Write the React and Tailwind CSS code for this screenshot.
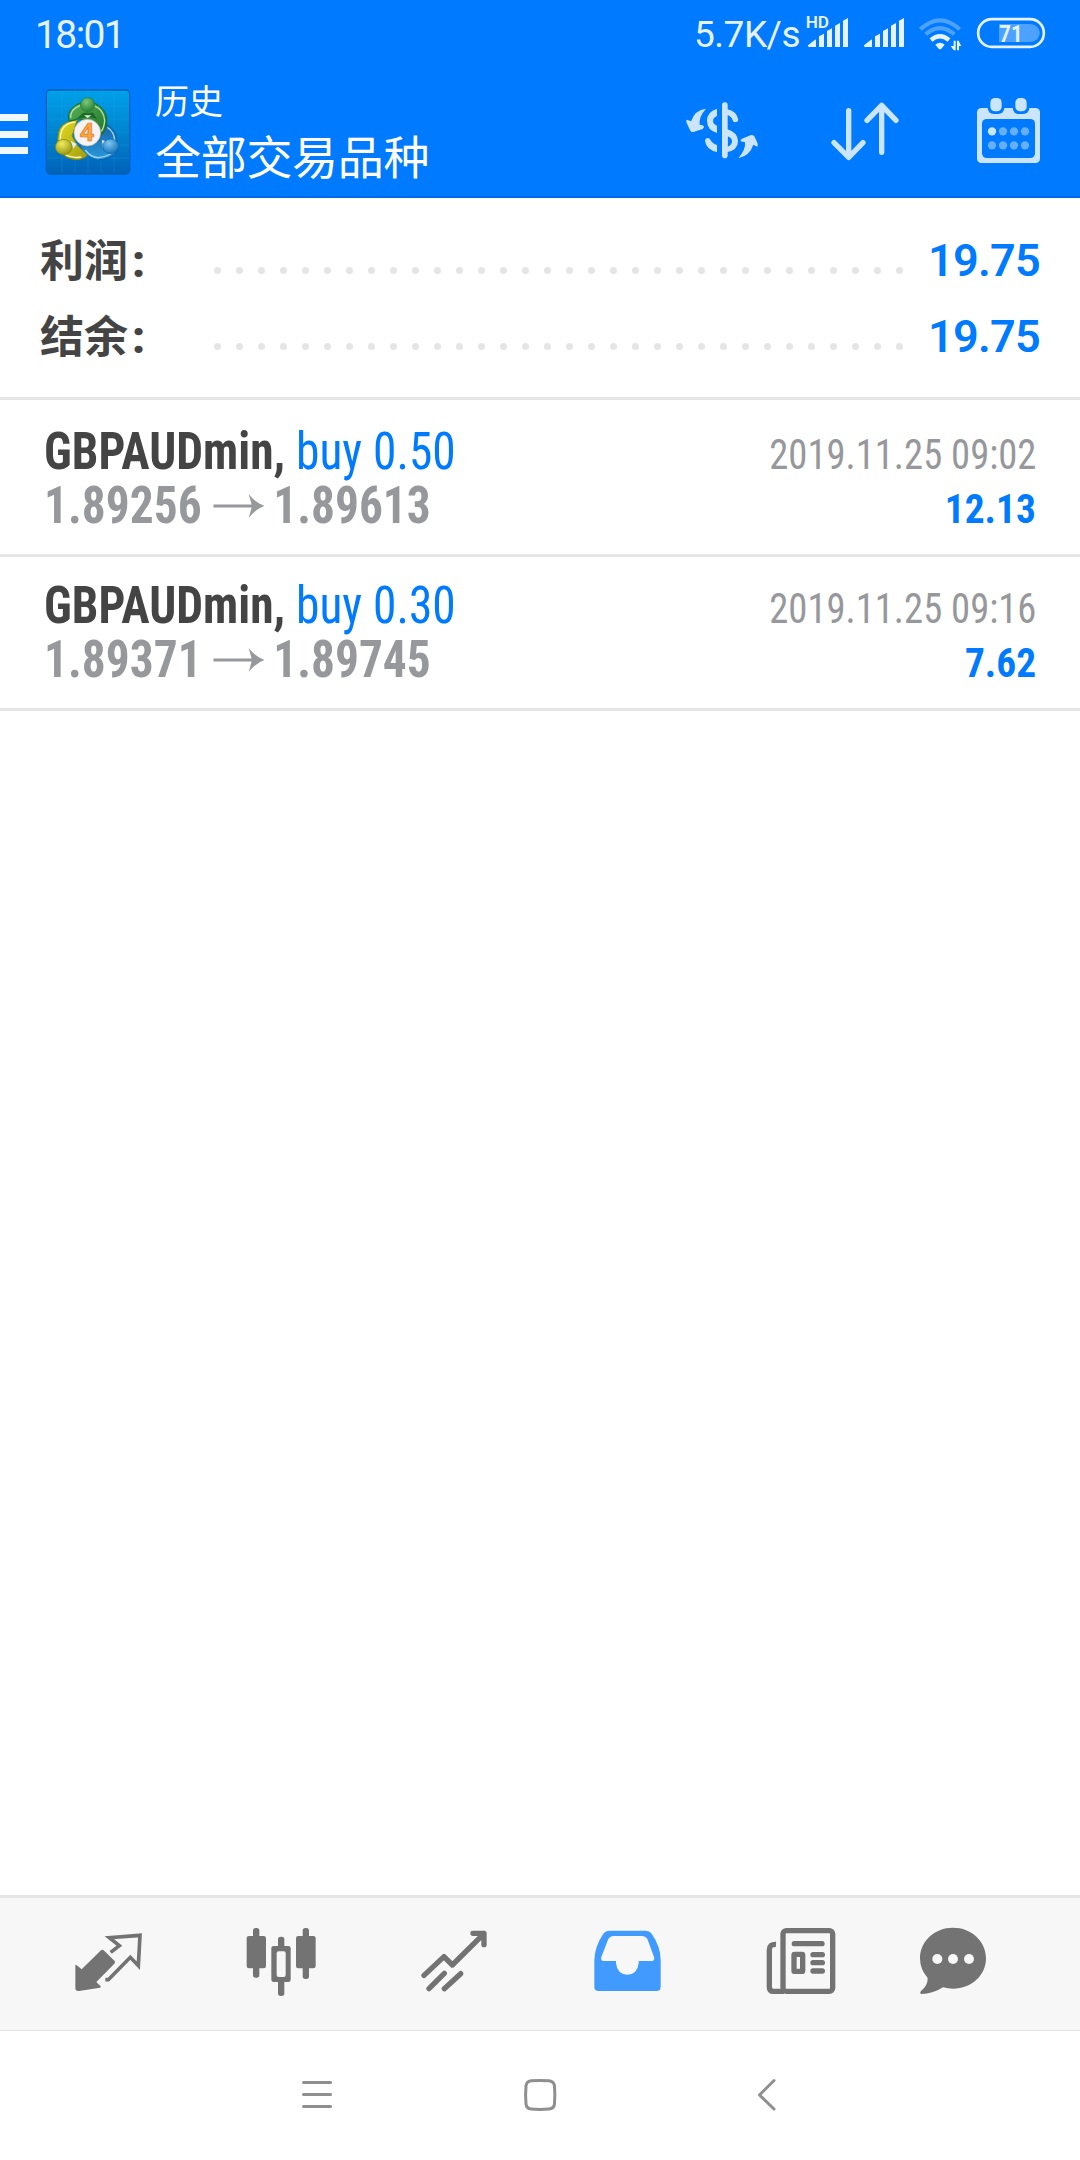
import React from 'react'

const summary = [
  { label: '利润', value: '19.75' },
  { label: '结余', value: '19.75' },
]

const deals = [
  {
    id: 1,
    symbol: 'GBPAUDmin,',
    action: 'buy 0.50',
    open: '1.89256',
    close: '1.89613',
    time: '2019.11.25 09:02',
    profit: '12.13',
  },
  {
    id: 2,
    symbol: 'GBPAUDmin,',
    action: 'buy 0.30',
    open: '1.89371',
    close: '1.89745',
    time: '2019.11.25 09:16',
    profit: '7.62',
  },
]

function Signal({ hd }) {
  return (
    <svg className="w-[43px] h-9 overflow-visible" viewBox="435 45 129 108" fill="#e6f2ff">
      {hd && (
        <text x="434" y="84" fontSize="48" fontWeight="600" fontFamily="Roboto, sans-serif" textLength="70" lengthAdjust="spacingAndGlyphs">
          HD
        </text>
      )}
      <path d="M441 136 L462 119 Q465 117 465 121 V141 H444 Q439 140 441 136Z" />
      <path d="M474 109 L489 101 V141 H474Z" />
      <path d="M498 93 L513 85 V141 H498Z" />
      <path d="M522 77 L537 69 V141 H522Z" />
      <path d="M546 62 L561 54 V141 H546Z" />
    </svg>
  )
}

function StatusBar() {
  return (
    <div className="h-[66px] flex items-start pl-[35px] pr-[34px] text-[#e6f2ff]">
      <span className="text-[39px] leading-[46px] mt-3 tracking-[-1.6px]">18:01</span>
      <div className="ml-auto flex items-start">
        <span className="text-[37px] leading-[44px] mt-[13px] mr-[6px] tracking-[-0.5px]">5.7K/s</span>
        <div className="flex mt-[15px]">
          <Signal hd />
          <div className="ml-[13px]">
            <Signal />
          </div>
          <svg className="w-[44px] h-9 ml-[13px]" viewBox="774 45 132 108" fill="none">
            <path d="M781 88 Q840 34 899 88" stroke="#4da2ff" strokeWidth="12" />
            <path d="M797 103 Q840 66 883 103" stroke="#4da2ff" strokeWidth="12" />
            <path d="M813 120 Q840 98 867 120" stroke="#e6f2ff" strokeWidth="13" />
            <path d="M826 134 Q840 122 854 134 L844 146 Q840 149 836 146Z" fill="#e6f2ff" />
            <path d="M881 122 V151 H887 V122Z M881 151 L872 138 H881Z M891 151 V122 H897 V151Z M897 125 L904 138 H897Z" fill="#e6f2ff" />
          </svg>
          <svg className="w-[70px] h-9 ml-[14px] overflow-visible" viewBox="948 45 210 108" fill="none">
            <path d="M1017 72 H1112 A27 27 0 0 1 1112 126 H1017Z" fill="#4da2ff" />
            <rect x="954.5" y="57.5" width="197" height="83" rx="41" stroke="#e6f2ff" strokeWidth="8" />
            <text x="1018" y="126" fill="#e6f2ff" fontSize="74" fontWeight="700" fontFamily="Roboto, sans-serif" textLength="70" lengthAdjust="spacingAndGlyphs">
              71
            </text>
          </svg>
        </div>
      </div>
    </div>
  )
}

function AppLogo() {
  return (
    <svg className="w-[86px] h-[86px]" viewBox="3 9 258 258">
      <defs>
        <linearGradient id="bg" x1="0" y1="0" x2="0" y2="1">
          <stop offset="0" stopColor="#00a0ea" />
          <stop offset="0.5" stopColor="#0084d0" />
          <stop offset="1" stopColor="#0062b8" />
        </linearGradient>
        <linearGradient id="greenBody" x1="0" y1="0" x2="1" y2="1">
          <stop offset="0" stopColor="#5cb058" />
          <stop offset="1" stopColor="#1c7428" />
        </linearGradient>
        <linearGradient id="yellowBody" x1="0" y1="0" x2="1" y2="1">
          <stop offset="0" stopColor="#e4dc20" />
          <stop offset="1" stopColor="#a09c10" />
        </linearGradient>
        <linearGradient id="blueBody" x1="0" y1="0" x2="0" y2="1">
          <stop offset="0" stopColor="#1464a8" />
          <stop offset="1" stopColor="#2c98dc" />
        </linearGradient>
        <radialGradient id="green" cx="0.4" cy="0.3" r="0.8">
          <stop offset="0" stopColor="#7cc87a" />
          <stop offset="1" stopColor="#1d7a2c" />
        </radialGradient>
        <radialGradient id="yellow" cx="0.4" cy="0.3" r="0.8">
          <stop offset="0" stopColor="#f0ec60" />
          <stop offset="1" stopColor="#8c8c08" />
        </radialGradient>
        <radialGradient id="blue" cx="0.4" cy="0.3" r="0.8">
          <stop offset="0" stopColor="#7cc8f4" />
          <stop offset="1" stopColor="#0a68b0" />
        </radialGradient>
      </defs>
      <rect x="7" y="12" width="250" height="252" rx="12" fill="url(#bg)" stroke="#0060b4" strokeWidth="4" />
      <path d="M54 14V262 M93 14V262 M132 14V262 M171 14V262 M210 14V262 M9 60H255 M9 99H255 M9 138H255 M9 177H255 M9 216H255" stroke="#30a8ec" strokeOpacity="0.3" strokeWidth="2" />
      <path d="M180 112 Q205 122 214 142 Q222 165 220 195 Q200 220 160 222 Q125 215 106 178 L165 165Z" fill="url(#blueBody)" stroke="#0c60a8" strokeWidth="3" />
      <path d="M190 124 Q212 138 212 166 M124 192 Q140 214 162 215 Q184 213 200 204" fill="none" stroke="#9cd8f8" strokeWidth="4" />
      <path d="M100 102 Q60 106 48 128 Q38 150 44 190 Q66 224 106 220 Q124 216 130 208 L100 178 L84 150Z" fill="url(#yellowBody)" stroke="#8c8808" strokeWidth="3" />
      <path d="M94 108 Q64 110 54 132 Q48 146 49 164 M64 206 Q84 218 112 213" fill="none" stroke="#f8f4b0" strokeWidth="4" />
      <path d="M76 106 C66 78 88 58 112 50 H146 C172 58 190 80 188 106 Q186 138 168 150 L150 110 L104 98Z" fill="url(#greenBody)" stroke="#186c24" strokeWidth="3" />
      <path d="M80 96 Q78 70 108 59 M150 59 Q180 72 182 104 Q180 126 172 136" fill="none" stroke="#b4e0ac" strokeWidth="4" />
      <path d="M98 98 L118 80 H148 L160 102 Q150 92 130 94Z" fill="#186c24" />
      <path d="M120 88 H142 L131 96Z" fill="#e4f0e0" />
      <path d="M88 188 L80 164 L98 174Z M176 186 L174 162 L186 166Z" fill="#dcecf4" />
      <circle cx="131" cy="56" r="21" fill="url(#green)" stroke="#267c34" strokeWidth="2" />
      <ellipse cx="59" cy="183" rx="25" ry="23" fill="url(#yellow)" stroke="#84820c" strokeWidth="2" />
      <ellipse cx="200" cy="181" rx="24" ry="22" fill="url(#blue)" stroke="#0c68b0" strokeWidth="2" />
      <circle cx="130" cy="140" r="40" fill="#f4f2f4" stroke="#b8b4a8" strokeWidth="2" />
      <text x="129" y="166" textAnchor="middle" fontSize="74" fontWeight="700" fontFamily="Open Sans, sans-serif" fill="#fba930" stroke="#e0704a" strokeWidth="2">
        4
      </text>
    </svg>
  )
}

function DollarIcon() {
  return (
    <svg className="w-[76px] h-[72px]" viewBox="72 48 228 216" fill="#cce5ff">
      <rect x="186" y="67" width="17" height="168" rx="8.5" />
      <path d="M171 86 V108 Q159 113 159 123 Q159 132 171 137 V159 Q141 150 141 122 Q141 95 171 86Z" />
      <path d="M200 96 Q222 101 226 118" fill="none" stroke="#cce5ff" strokeWidth="17" strokeLinecap="round" />
      <path fillRule="evenodd" d="M200 147 Q234 157 234 184 Q234 211 200 217Z M203 169 V200 Q216 196 216 184 Q216 174 203 169Z" />
      <path d="M135 184 Q136 174 144 174 Q150 175 152 181 Q157 191 171 195 V216 Q140 211 135 184Z" />
      <path d="M138 86 Q104 90 93 124 Q84 120 80 119 Q77 123 81 131 L91 152 Q94 157 100 156 L128 147 Q134 143 131 138 Q127 134 119 134 Q116 110 138 86Z" />
      <path d="M235 235 Q270 226 280 194 L292 200 Q295 197 292 188 L283 169 Q279 164 273 165 L246 176 Q240 180 242 184 L255 187 Q258 207 235 235Z" />
    </svg>
  )
}

function SortIcon() {
  return (
    <svg className="w-[72px] h-[72px]" viewBox="507 48 216 216" fill="none" stroke="#cce5ff" strokeWidth="16" strokeLinecap="round" strokeLinejoin="round">
      <path d="M566 92V232 M522 188L566 232L609 188" />
      <path d="M665 217V76 M621 121L665 76L708 121" />
    </svg>
  )
}

function CalendarIcon() {
  return (
    <svg className="w-[67px] h-[72px]" viewBox="945 48 201 216">
      <rect x="951" y="84" width="189" height="165" rx="13" fill="#cce5ff" />
      <rect x="966" y="117" width="159" height="117" rx="14" fill="#007aff" />
      {[1008, 1083].map((x) => (
        <g key={x}>
          <rect x={x - 25} y="46" width="50" height="56" rx="18" fill="#007aff" />
          <rect x={x - 17} y="54" width="34" height="40" rx="14" fill="#cce5ff" />
        </g>
      ))}
      {[996, 1029, 1062, 1095].map((x) => (
        <g key={x} fill="#66afff">
          <circle cx={x} cy="154" r="12.5" fill={x === 996 ? '#cce5ff' : '#66afff'} />
          <circle cx={x} cy="196" r="12.5" />
        </g>
      ))}
    </svg>
  )
}

function Header() {
  return (
    <div className="h-[132px] border-b-2 border-[#006be0] flex items-start">
      <div className="w-7 mt-12 flex flex-col gap-[9.5px]">
        <div className="h-[7px] bg-[#f0f7ff]" />
        <div className="h-[7px] bg-[#f0f7ff]" />
        <div className="h-[7px] bg-[#f0f7ff]" />
      </div>
      <div className="ml-[17px] mt-[23px]">
        <AppLogo />
      </div>
      <div className="ml-6 mt-4 text-white">
        <p className="text-[34px] leading-[40px]">历史</p>
        <p className="text-[46px] leading-[56px] mt-2 tracking-[-0.3px]">全部交易品种</p>
      </div>
      <div className="ml-auto mt-[30px] mr-[38px] flex">
        <DollarIcon />
        <div className="ml-[69px]">
          <SortIcon />
        </div>
        <div className="ml-[74px]">
          <CalendarIcon />
        </div>
      </div>
    </div>
  )
}

function SummaryRow({ label, value }) {
  return (
    <div className="h-[76px] flex items-center pl-10 pr-[40px]">
      <span className="w-[110px] pt-[6px] text-[44px] leading-none font-semibold text-[#444]">
        {label}
        <span className="ml-1 font-black">:</span>
      </span>
      <div className="ml-16 mt-[22px] flex gap-[15px]">
        {[...Array(32)].map((_, i) => (
          <div key={i} className="w-[7px] h-[7px] rounded-full bg-[#e5e5e5]" />
        ))}
      </div>
      <span className="ml-auto mt-[2px] text-[45px] leading-none font-semibold tracking-[-0.7px] text-[#007aff]">{value}</span>
    </div>
  )
}

function DealRow({ deal }) {
  return (
    <div className="h-[154px] border-b-3 border-[#e5e5e5] px-11 pt-[22px] font-stretch-75%">
      <div className="h-[54px] flex justify-between items-baseline leading-[54px]">
        <p className="text-[51px] text-[#007aff] origin-left scale-x-[0.93]">
          <span className="font-bold text-[#444]">{deal.symbol}</span> {deal.action}
        </p>
        <p className="text-[42px] text-[#97989b] origin-right scale-x-[0.92]">{deal.time}</p>
      </div>
      <div className="h-[54px] flex justify-between items-baseline leading-[54px]">
        <p className="text-[51px] font-bold text-[#97989b] flex items-center origin-left scale-x-[0.93]">
          {deal.open}
          <svg className="w-[55px] h-6 ml-[13px] mr-[9px]" viewBox="0 0 52 24" preserveAspectRatio="none" fill="#97989b">
            <path d="M0 10.5H39L36 0Q43 9 52 12Q43 15 36 24L39 13.5H0Z" />
          </svg>
          {deal.close}
        </p>
        <p className="text-[41px] font-bold text-[#007aff] origin-right scale-x-[0.96]">{deal.profit}</p>
      </div>
    </div>
  )
}

function TabBar() {
  return (
    <div className="h-[136px] border-t-3 border-b border-t-[#e5e5e5] border-b-[#e2e2e2] bg-[#f7f7f7] pl-[72px] pt-[27px] flex gap-[101px]">
      {/* Quotes */}
      <svg className="w-[72px] h-[72px]" viewBox="96 135 216 216">
        <path d="M106 256 Q107 253 110 256 L125 268 L183 211 Q187 208 191 211 L224 243 Q227 247 223 251 L169 306 L182 319 Q184 322 180 323 L117 333 Q106 334 106 324Z" fill="#737373" />
        <path d="M212 217 L238 197 L208 173 L300 166 L295 257 L271 232 L205 299 H196" fill="none" stroke="#737373" strokeWidth="11" />
      </svg>
      {/* Charts */}
      <svg className="w-[72px] h-[72px]" viewBox="615 135 216 216" fill="#737373">
        <rect x="639" y="144" width="19" height="149" rx="8" />
        <rect x="620" y="168" width="58" height="97" rx="7" />
        <rect x="788" y="144" width="19" height="153" rx="8" />
        <rect x="768" y="168" width="59" height="97" rx="7" />
        <rect x="714" y="170" width="19" height="178" rx="8" />
        <rect x="694" y="198" width="58" height="108" rx="7" />
        <rect x="710" y="214" width="27" height="77" rx="6" fill="#f7f7f7" />
      </svg>
      {/* Trade */}
      <svg className="w-[72px] h-[72px]" viewBox="1134 135 216 216" fill="none" stroke="#737373" strokeWidth="16" strokeLinecap="round" strokeLinejoin="round">
        <path d="M1152 286 L1212 230 L1237 255 L1332 161 M1299 160 H1332 V194" />
        <path d="M1167 326 L1213 280 M1213 326 L1262 281" />
      </svg>
      {/* History */}
      <svg className="w-[72px] h-[72px]" viewBox="93 135 216 216">
        <path fillRule="evenodd" fill="#419bff" d="M147 152 H258 Q268 152 274 160 Q302 200 302 240 V320 Q302 333 289 333 H116 Q103 333 103 320 V240 Q104 200 131 160 Q137 152 147 152Z M162 168 Q149 168 144 179 L124 231 Q121 243 131 243 H168 V250 Q172 284 202 284 Q232 284 236 250 V243 H275 Q285 243 282 231 L263 179 Q258 168 245 168Z" />
      </svg>
      {/* News */}
      <svg className="w-[72px] h-[72px]" viewBox="612 135 216 216" fill="none" stroke="#737373">
        <rect x="669" y="152" width="149" height="182" rx="10" strokeWidth="16" />
        <path d="M648 193 Q628 192 628 210 V320 Q628 334 640 334 H672" strokeWidth="16" />
        <path d="M703 191H786 M759 224H787 M759 248H787 M759 273H787" strokeWidth="16" strokeLinecap="round" />
        <rect x="702" y="223" width="26" height="51" rx="2" strokeWidth="16" />
      </svg>
      {/* Mailbox */}
      <svg className="w-[72px] h-[72px] -ml-5" viewBox="1071 135 216 216">
        <path d="M1179 143 C1235 143 1278 184 1278 235 C1278 286 1235 326 1179 326 Q1164 326 1149 322 Q1120 341 1084 342 Q1078 339 1083 333 Q1104 316 1103 294 Q1080 268 1080 235 C1080 184 1123 143 1179 143Z" fill="#737373" />
        <g fill="#f7f7f7">
          <circle cx="1132" cy="237" r="15" />
          <circle cx="1179" cy="237" r="15" />
          <circle cx="1227" cy="237" r="15" />
        </g>
      </svg>
    </div>
  )
}

function NavBar() {
  return (
    <div className="h-[129px] bg-white flex items-start pt-[46px] pl-[300px] text-[#8f8f8f]">
      <svg className="w-[34px] h-9" viewBox="0 0 34 36" stroke="currentColor" strokeWidth="3" strokeLinecap="round">
        <path d="M3.5 5.5H30.5 M3.5 17.5H30.5 M3.5 29.5H30.5" />
      </svg>
      <svg className="w-9 h-9 ml-[188px]" viewBox="0 0 36 36" fill="none" stroke="currentColor" strokeWidth="3">
        <path d="M9 3.8 Q18 3 27 3.8 Q32 4.3 32.5 9 Q33.2 18 32.5 27 Q32 31.5 27 32 Q18 32.8 9 32 Q4.5 31.5 4 27 Q3.2 18 4 9 Q4.5 4.3 9 3.8Z" />
      </svg>
      <svg className="w-6 h-9 ml-[197px]" viewBox="0 0 24 36" fill="none" stroke="currentColor" strokeWidth="3" strokeLinecap="round" strokeLinejoin="round">
        <path d="M19 3.5L4.5 18L19 32" />
      </svg>
    </div>
  )
}

function App() {
  return (
    <div className="w-[1080px] h-[2160px] bg-white flex flex-col font-[Roboto,'Noto_Sans_CJK_SC',sans-serif]">
      <div className="bg-[#007aff]">
        <StatusBar />
        <Header />
      </div>
      <div className="h-[202px] border-b-3 border-[#e5e5e5] pt-[23px]">
        {summary.map((row) => (
          <SummaryRow key={row.label} label={row.label} value={row.value} />
        ))}
      </div>
      <div className="flex-1 pt-[3px]">
        {deals.map((deal) => (
          <DealRow key={deal.id} deal={deal} />
        ))}
      </div>
      <TabBar />
      <NavBar />
    </div>
  )
}

export default App
